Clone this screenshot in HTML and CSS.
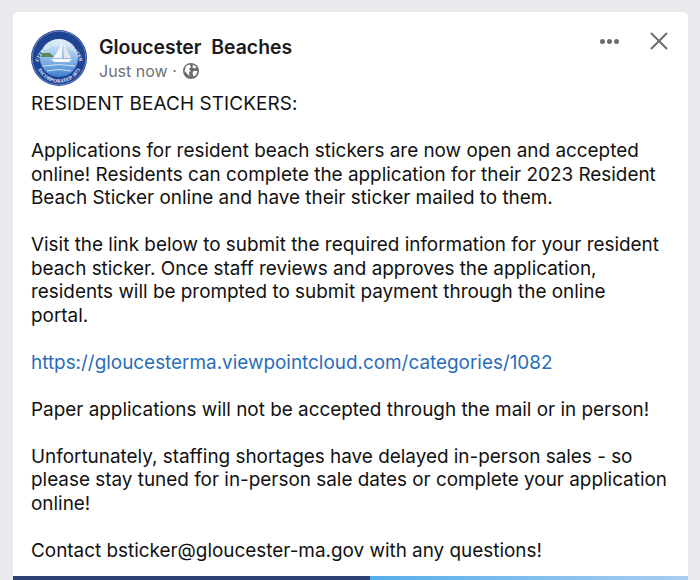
FILE: index.html
```html
<!DOCTYPE html>
<html lang="en">
<head>
    <meta charset="UTF-8">
    <title>Gloucester Beaches</title>
    <link rel="stylesheet" href="styles.css">
</head>
<body>
    <div class="card">
        <div class="post-head">
            <svg class="seal" viewBox="0 0 56 56" width="56" height="56">
                <defs>
                    <path id="arcTop" d="M7.5 32 A21 21 0 0 1 48.5 32"/>
                    <path id="arcBottom" d="M5 34 A23.5 23.5 0 0 0 51 34"/>
                    <linearGradient id="sea" x1="0" y1="0" x2="0" y2="1">
                        <stop offset="0" stop-color="#e6f1fb"/>
                        <stop offset="0.5" stop-color="#8fbce8"/>
                        <stop offset="1" stop-color="#3f7fd0"/>
                    </linearGradient>
                </defs>
                <circle cx="28" cy="28" r="28" fill="#1f4494"/>
                <circle cx="28" cy="28" r="26.8" fill="none" stroke="#dfe6f2" stroke-width="0.4"/>
                <circle cx="28" cy="28" r="19" fill="url(#sea)"/>
                <path d="M10 23 h9 l4 4 h-13 z" fill="#5b8a5a"/>
                <path d="M31 12 L31 28 L22 28 Q27 22 31 12 Z" fill="#f4f4f6"/>
                <path d="M33 13 L33 28 L40 28 Q36 20 33 13 Z" fill="#e4e6ec"/>
                <path d="M20 29 H41 L38 32 H23 Z" fill="#f7f7f9"/>
                <path d="M12 36 Q28 33 44 36 M16 41 Q28 38 40 41" fill="none" stroke="#cfe2f6" stroke-width="1"/>
                <text class="seal-text"><textPath href="#arcTop" startOffset="50%" text-anchor="middle">CITY OF GLOUCESTER</textPath></text>
                <text class="seal-text"><textPath href="#arcBottom" startOffset="50%" text-anchor="middle">INCORPORATED 1873</textPath></text>
            </svg>
            <div class="who">
                <div class="page-name">Gloucester&nbsp; Beaches</div>
                <div class="post-meta">
                    <span>Just now ·</span>
                    <svg viewBox="0 0 16 16" width="16" height="16">
                        <circle cx="8" cy="8" r="8" fill="#6b6d71"/>
                        <path d="M3 3 L6.5 1.5 L8 4 L6 6 L7.5 8 L6 9.5 L6.5 13.5 L4.5 11 L1.5 8 Z M10 1.5 L13.5 4 L12 5.5 L9.5 4.5 Z M10.5 8 L14.5 8 L13 12 L10.5 13.5 L9.5 10 Z" fill="#fff"/>
                    </svg>
                </div>
            </div>
            <div class="actions">
                <span class="dots"><i></i><i></i><i></i></span>
                <svg viewBox="0 0 18 18" width="18" height="18">
                    <path d="M1.5 1.5 L16.5 16.5 M16.5 1.5 L1.5 16.5" stroke="#6b6d71" stroke-width="2" stroke-linecap="round"/>
                </svg>
            </div>
        </div>

        <div class="post-body">
            <p class="caps">RESIDENT BEACH STICKERS:</p>
            <p>Applications for resident beach stickers are now open and accepted<br>online! Residents can complete the application for their 2023 Resident<br>Beach Sticker online and have their sticker mailed to them.</p>
            <p>Visit the link below to submit the required information for your resident<br>beach sticker. Once staff reviews and approves the application,<br>residents will be prompted to submit payment through the online<br>portal.</p>
            <p><a href="#">https://gloucesterma.viewpointcloud.com/categories/1082</a></p>
            <p>Paper applications will not be accepted through the mail or in person!</p>
            <p>Unfortunately, staffing shortages have delayed in-person sales - so<br>please stay tuned for in-person sale dates or complete your application<br>online!</p>
            <p>Contact bsticker@gloucester-ma.gov with any questions!</p>
        </div>

        <div class="photo-strip">
            <div class="strip-dark"></div>
            <div class="strip-light"></div>
        </div>
    </div>
</body>
</html>
```

FILE: styles.css
```css
*,
*::before,
*::after {
    box-sizing: border-box;
}
html, body {
    height: 100%;
}
body {
    margin: 0;
    padding: 12px 12px 0 13px;
    background-color: #e8eaed;
    font-family: Inter, "Liberation Sans", sans-serif;
    color: #111;
    overflow: hidden;
}
.card {
    height: 568px;
    background-color: #fff;
    border-radius: 5px 5px 0 0;
    display: flex;
    flex-direction: column;
    overflow: hidden;
}
.post-head {
    display: flex;
    align-items: flex-start;
    padding: 18px 20px 0 18px;
}
.seal {
    flex: none;
}
.seal-text {
    font-family: "Liberation Serif", serif;
    font-size: 5px;
    font-weight: bold;
    fill: #eef2fa;
}
.who {
    flex: 1;
    margin-left: 12px;
    padding-top: 5px;
}
.page-name {
    font-size: 19.4px;
    font-weight: 600;
    line-height: 24px;
    color: #1b1b1d;
}
.post-meta {
    display: flex;
    align-items: center;
    gap: 6px;
    margin-top: 1px;
    font-size: 16px;
    line-height: 22px;
    color: #6f7175;
}
.actions {
    display: flex;
    align-items: center;
    gap: 31px;
    padding-top: 2px;
}
.dots {
    display: flex;
    gap: 2px;
}
.dots i {
    width: 5px;
    height: 5px;
    border-radius: 50%;
    background-color: #6b6d71;
}
.post-body {
    flex: 1;
    min-height: 0;
    padding: 6px 18px 0 18px;
    font-size: 18.9px;
    line-height: 23.5px;
    white-space: nowrap;
}
.post-body p {
    margin: 0 0 23.5px 0;
}
.post-body .caps {
    letter-spacing: 0.12px;
}
.post-body a {
    color: #2a6db8;
    text-decoration: none;
}
.photo-strip {
    display: flex;
    height: 4px;
    flex: none;
}
.strip-dark {
    width: 357px;
    background-color: #2d4373;
}
.strip-light {
    flex: 1;
    background: linear-gradient(to right, #55aeea, #a9cdf0);
}
```
